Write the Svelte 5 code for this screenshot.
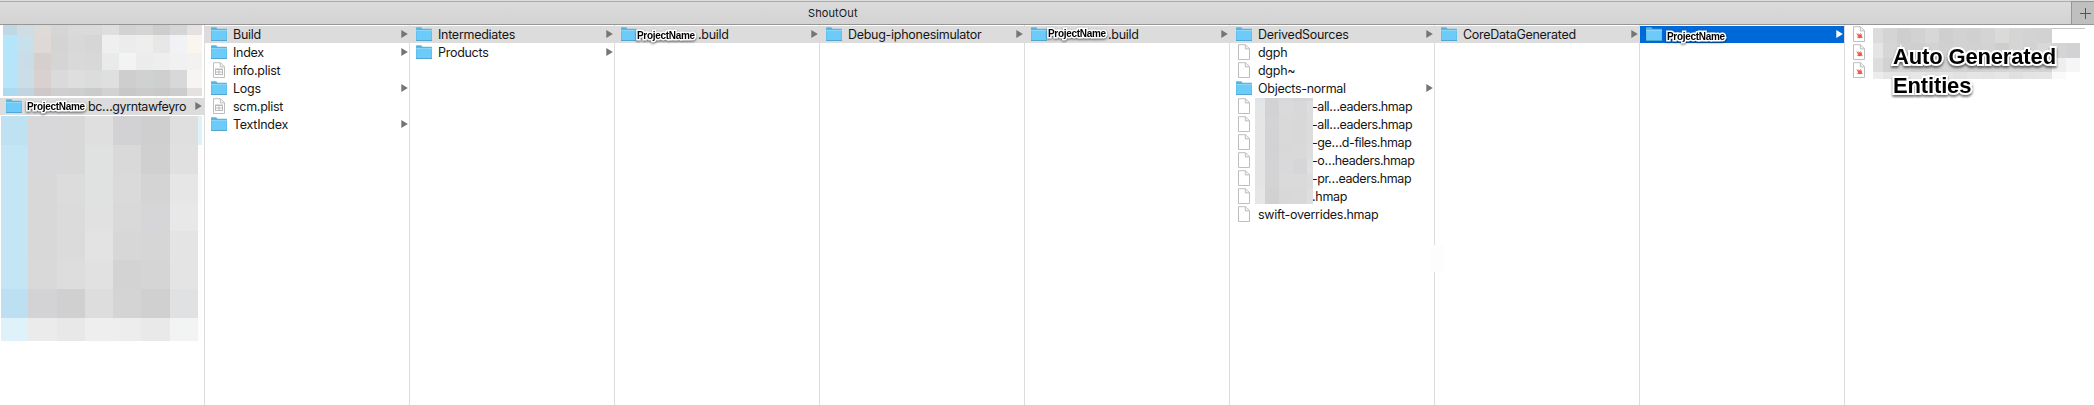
<script>
  const f = (name, o = {}) => ({ kind: 'folder', name, arrow: true, ...o });
  const d = (name, o = {}) => ({ kind: 'doc', name, ...o });
  const columns = [
    [f('Build', { sel: true }), f('Index'), d('info.plist', { kind: 'plist' }), f('Logs'), d('scm.plist', { kind: 'plist' }), f('TextIndex')],
    [f('Intermediates', { sel: true }), f('Products')],
    [f('.build', { sel: true, pad: 55, tag: [16, 3] })],
    [f('Debug-iphonesimulator', { sel: true })],
    [f('.build', { sel: true, pad: 55, tag: [17, 1] })],
    [
      f('DerivedSources', { sel: true }), d('dgph'), d('dgph~'), f('Objects-normal'),
      d('-all…eaders.hmap', { pad: 54 }), d('-all…eaders.hmap', { pad: 54 }), d('-ge…d-files.hmap', { pad: 54 }),
      d('-o…headers.hmap', { pad: 54 }), d('-pr…eaders.hmap', { pad: 54 }), d('.hmap', { pad: 54 }), d('swift-overrides.hmap')
    ],
    [f('CoreDataGenerated', { sel: true })],
    [f('', { active: true, tag: [21, 4] })],
    [d('', { kind: 'swift' }), d('', { kind: 'swift' }), d('', { kind: 'swift' })]
  ];
  const top = {
    cols: [14, 17, 17, 17, 17, 17, 17, 17, 17, 17, 17, 15],
    rows: [10, 18, 17, 18, 8],
    cells: `c0d8e4 cfdce2 dedad8 d6d6d6 dadada dadadb dedede d2d2d2 d5d5d5 cdcdcd d5d5d6 e5e1e0
      b4e5fb c8e0eb ded9d7 d4d4d5 d8d8d8 d6d6d7 efefef ebecec eeeeec e7e7e7 f0f2f5 fbf5f0
      b6e4f9 c9dde8 d5d0cd d5d5d6 d9d9da d8d8d8 e9ebea f3f3f4 ececec eeeeee f1f1f1 f3f2f1
      b6e4f9 cbdee8 d8d1d0 dadadc dedede dbdddc dfdfdf cececf d0d1d1 cecfcf d8d8da f7f5f3
      acdbf1 c1d5e0 cfc8c8 cfcfd1 cecece cacccb d2d2d2 c8c8c8 cbcbcb c9c9c9 cdcdcd e5e1e0`
  };
  const bottom = {
    cols: [27, 29, 28, 28, 28, 29, 28, 4],
    rows: [29, 29, 29, 28, 29, 29, 29, 23],
    cells: `bfe2f2 d8d8da d8d8d9 dfdfdf d2d2d4 cfcfd0 dfdfdf dff2f8
      c3e5f4 d8d8db d8d8d8 e0e1e1 d9d9d9 d0d0d0 e0e0e0 fdfdfd
      c3e5f4 d8d8d8 dcdcdc dfe2e0 dadada d4d4d4 e6e6e6 fbfdfc
      c3e5f4 d8d8d8 dbdbdb e1e1e1 d9d9d9 d6d6d9 e8e8e8 fdfdfd
      c3e5f4 d8d8d8 dbdbdb e3e3e3 d7d7d7 d6d6d6 e4e4e4 fdfdfd
      c3e5f4 d9d9d9 dddddd e1e1e1 d3d3d3 d5d5d5 e4e4e4 fdfdfd
      bce0f2 d3d3d6 d0d0d0 dddddd d4d4d4 d0d0d0 e0e1e3 fdfdfd
      e0f2f9 ebebeb e8e8e8 eeeeee ededed e9e9e9 f1f4f3 fdfdfd`
  };
  const names = {
    cols: [10, 14, 14, 14, 6],
    rows: [3, 14, 15, 14, 15, 15, 14, 16],
    cells: `dce6ea d3d3d4 d8d8d9 d5d5d5 d6d6d6
      e4e5e5 d2d2d4 dadadd d8d8da dedcdc
      e4e5e4 d3d3d5 d9d9d9 d8d8d8 dddcdc
      e5e5e5 d2d2d4 d9d9d9 d8d8d8 dcdcdc
      e5e5e5 d2d2d4 d8d8d8 d9d9d9 dddddd
      e4e4e4 d3d3d5 d9d9db d6d6d8 e0e0e1
      e4e5e3 d3d3d3 dadada dadada dcdcdc
      e6e6e6 d1d1d1 d8d8d8 d9d9d9 dedede`
  };
  const entities = {
    cols: [10, 14, 14, 14, 14, 14, 14, 14, 14, 14, 14, 14, 15, 14, 14],
    rows: [15, 15, 14, 7],
    cells: `dcdcdd d4d4d5 cecece d2d2d2 d7d7d7 cfcfcf d2d2d2 d0d0d0 d4d4d4 dadad8 d5d5d5 d3d3d3 d2d2d2 ffffff ffffff
      e5e5e5 d6d6d6 d0d0d0 cfcfcf d3d3d3 d0d0d0 d2d2d2 d1d1d1 d3d3d3 cecece d5d5d5 d2d2d2 d8d8d8 d5d5d6 d2d2d4
      dcdede d2d2d2 d4d4d4 cfcfcf d0d0d0 d3d3d3 d2d2d2 d0d0d0 d3d3d3 d5d5d5 d6d6d6 d4d4d4 d3d3d3 eeeeee f6f6f6
      ececec e5e5e5 e3e3e3 e6e6e6 e2e2e2 e5e5e5 e1e1e1 e5e5e5 e3e3e3 e6e6e6 e0e0e0 e4e4e4 e5e5e5 fafafa ffffff`
  };
  const px = (a) => a.map((n) => n + 'px').join(' ');
</script>

{#snippet mosaic(m, cls)}
  <div class="mosaic {cls}" style="grid-template-columns:{px(m.cols)};grid-template-rows:{px(m.rows)}">
    {#each m.cells.trim().split(/\s+/) as c}<i style="background:#{c}"></i>{/each}
  </div>
{/snippet}

{#snippet icon(kind)}
  {#if kind === 'folder'}
    <svg class="icon" width="16" height="17" viewBox="0 0 16 17">
      <path d="M0 2Q0 1.2 .7 1.2H5.2L6.6 2.8H15.4Q16 2.8 16 3.4V15H0Z" fill="#58b5e2" />
      <path d="M.5 4.5H15.5V14H.5Z" fill="#6ccbf8" />
      <path d="M0 4.5H16" stroke="#8bd7f9" />
      <path d="M0 14.5H16" stroke="#52a7d2" />
    </svg>
  {:else}
    <svg class="icon" width="16" height="17" viewBox="0 0 16 17">
      <path d="M2.5 .7H9.5L13.5 4.7V15.5H2.5Z" fill="#fff" stroke="#bebebe" />
      <path d="M9.3 1V4.9H13.2" fill="#f0f0f0" stroke="#bebebe" />
      {#if kind === 'plist'}
        <path d="M4 6.5H12V13H4Z" fill="#bababa" />
        <path d="M5 8H7.5V9.6H5ZM8.5 8H11V9.6H8.5ZM5 10.5H7.5V12H5ZM8.5 10.5H11V12H8.5Z" fill="#fff" />
      {:else if kind === 'swift'}
        <path transform="translate(1.4 1) scale(.9)" d="M4.2 6.8L7.5 9 6 6.7 9 9 8.6 6.5Q11 8.2 10.6 10.5L11.6 12.6 9.8 12Q7 13.4 4.3 10.9L6.7 11.2Z" fill="#f4533c" />
      {/if}
    </svg>
  {/if}
{/snippet}

{#snippet row(r)}
  <div class="row" class:sel={r.sel} class:active={r.active}>
    {@render icon(r.kind)}
    <span class="name" class:short={r.name.includes('…')} style="padding-left:{r.pad ?? 0}px">{r.name}</span>
    {#if r.arrow}<svg class="arrow" width="7" height="8" viewBox="0 0 7 8"><path d="M.3 0L6.8 4 .3 8Z" /></svg>{/if}
    {#if r.tag}<b class="tag" style="left:{r.tag[0] + 6}px;top:{r.tag[1]}px">ProjectName</b>{/if}
  </div>
{/snippet}

<div class="window">
  <header>
    <span class="title">ShoutOut</span>
    <button aria-label="New tab"><svg width="11" height="11" viewBox="0 0 11 11"><path d="M5.5 0V11M0 5.5H11" stroke="#555" /></svg></button>
  </header>
  <main>
    <section class="first">
      {@render mosaic(top, 'upper')}
      {@render row({ kind: 'folder', name: 'bc…gyrntawfeyro', pad: 60, arrow: true, sel: true, tag: [21, 2] })}
      {@render mosaic(bottom, 'lower')}
    </section>
    {#each columns as col, i}
      <section>
        {#each col as r}{@render row(r)}{/each}
        {#if i === 5}{@render mosaic(names, 'names')}{/if}
        {#if i === 6}<div class="smudge"></div>{/if}
        {#if i === 8}
          {@render mosaic(entities, 'entities')}
          <div class="rule"></div>
          <div class="callout">Auto Generated<br />Entities</div>
        {/if}
      </section>
    {/each}
  </main>
</div>

<style>
  :global(body) { margin: 0; background: #fff; }
  .window { width: 2094px; height: 405px; overflow: hidden; display: flex; flex-direction: column; background: #fff; font-family: Inter, "Liberation Sans", sans-serif; color: #161616; }
  header { box-sizing: border-box; height: 25px; flex: none; display: flex; align-items: stretch; border-bottom: 1px solid #969696; background: linear-gradient(#dcdcdc 1px, #acacac 1px, #acacac 2px, #dbdbdc 2px, #d3d3d4); }
  .title { flex: 1; padding-left: 808px; font-size: 11px; line-height: 27px; letter-spacing: .1px; }
  button { box-sizing: border-box; width: 23px; margin-top: 1px; padding: 1px 0 0 8px; border: 0; border-left: 1px solid #969696; border-top: 1px solid #969696; background: #bfbfc0; display: flex; align-items: center; }
  button svg { flex: none; }
  main { flex: 1; display: flex; }
  section { box-sizing: border-box; position: relative; width: 205px; flex: none; padding-top: 1px; border-right: 1px solid #dcdcdc; display: flex; flex-direction: column; gap: 1px; }
  section:last-child { width: 249px; border: 0; }
  .first { padding-top: 0; gap: 0; }
  .row { position: relative; box-sizing: border-box; height: 17px; flex: none; padding: 0 1px 0 6px; display: flex; align-items: center; }
  .first .row { padding-right: 2px; }
  .sel { background: #dcdcdc; }
  .active { background: #0069d9; }
  .icon { flex: none; margin-right: 6px; }
  .name { flex: 1; white-space: nowrap; font-size: 12.5px; line-height: 17px; letter-spacing: -.28px; }
  .short { letter-spacing: -.42px; }
  .arrow { flex: none; margin-bottom: 1px; fill: #757575; }
  .active .arrow { fill: #fff; }
  .tag { position: absolute; font: bold 10px/14px "Liberation Sans", sans-serif; letter-spacing: -.3px; color: #000; -webkit-text-stroke: 3px #fff; paint-order: stroke fill; filter: drop-shadow(0 1px 1px #0009); }
  .mosaic { display: grid; flex: none; }
  .upper { margin: 0 0 2px 3px; }
  .lower { margin: 1px 0 0 1px; }
  .names { position: absolute; left: 25px; top: 73px; }
  .entities { position: absolute; left: 28px; top: 3px; }
  .rule { position: absolute; left: 207px; top: 3px; width: 33px; height: 1px; background: #c8c8c8; }
  .smudge { position: absolute; left: -4px; top: 220px; width: 13px; height: 27px; background: #fdfdfd; }
  .callout { position: absolute; left: 48px; top: 17px; white-space: nowrap; font: bold 22px/29px "Liberation Sans", sans-serif; letter-spacing: -.15px; color: #000; -webkit-text-stroke: 4px #fff; paint-order: stroke fill; filter: drop-shadow(0 2px 1px #0008); }
</style>
